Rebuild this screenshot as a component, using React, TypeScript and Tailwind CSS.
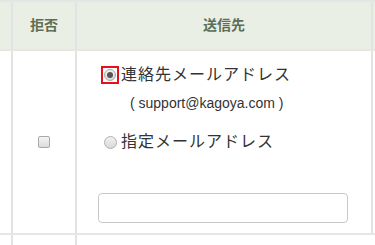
import React from "react";

export default function App() {
  const font = { fontFamily: '"Liberation Sans", Arial, "Noto Sans CJK JP", sans-serif' };
  return (
    <div className="w-[375px] h-[245px] bg-white overflow-hidden" style={font}>
      <div className="border-t-2 border-[#e5e5e5]">
        {/* header */}
        <div className="flex h-[49px] bg-[#e9efe4] border-b-2 border-[#e5e5e5]">
          <div className="w-[13px] border-r-2 border-[#e3e3e3]" />
          <div className="w-[64px] border-r-2 border-[#e3e3e3] flex items-center justify-center text-[14px] font-bold text-[#5e6e55]">拒否</div>
          <div className="w-[296px] border-r-2 border-[#e3e3e3] flex items-center justify-center text-[14px] font-bold text-[#5e6e55]">送信先</div>
        </div>
        {/* row */}
        <div className="flex h-[184px] border-b-2 border-[#e5e5e5]">
          <div className="w-[13px] border-r-2 border-[#e3e3e3]" />
          <div className="w-[64px] border-r-2 border-[#e3e3e3] flex items-center justify-center">
            <div className="w-[12px] h-[12px] rounded-[2px] border border-[#a8a8a8] bg-gradient-to-b from-[#f4f4f4] to-[#dcdcdc]" />
          </div>
          <div className="w-[296px] border-r-2 border-[#e3e3e3] pl-[21px] pt-[14px]">
            <div className="flex items-center h-[20px] pl-[3px]">
              <div className="w-[18px] h-[18px] border-2 border-[#e8101a] flex items-center justify-center">
                <div className="w-[12px] h-[12px] rounded-full border border-[#a8a8a8] bg-gradient-to-b from-[#f2f2f2] to-[#d8d8d8] flex items-center justify-center">
                  <div className="w-[6px] h-[6px] rounded-full bg-[#555]" />
                </div>
              </div>
              <span className="ml-[2px] text-[16px] tracking-[1px] text-[#333]">連絡先メールアドレス</span>
            </div>
            <div className="mt-[8px] ml-[32px] text-[14px] text-[#333]">( support@kagoya.com )</div>
            <div className="flex items-center h-[20px] mt-[18px] pl-[3px]">
              <div className="w-[18px] h-[18px] flex items-center justify-center">
                <div className="w-[13px] h-[13px] rounded-full border border-[#b0b0b0] bg-gradient-to-b from-[#f2f2f2] to-[#d8d8d8]" />
              </div>
              <span className="ml-[2px] text-[16px] tracking-[1px] text-[#333]">指定メールアドレス</span>
            </div>
            <div className="mt-[41px] w-[250px] h-[30px] rounded-[4px] border border-[#c8c8c8] bg-white" />
          </div>
        </div>
        <div className="flex h-[20px]">
          <div className="w-[13px] border-r-2 border-[#e3e3e3]" />
          <div className="w-[64px] border-r-2 border-[#e3e3e3]" />
          <div className="w-[296px]" />
        </div>
      </div>
    </div>
  );
}
